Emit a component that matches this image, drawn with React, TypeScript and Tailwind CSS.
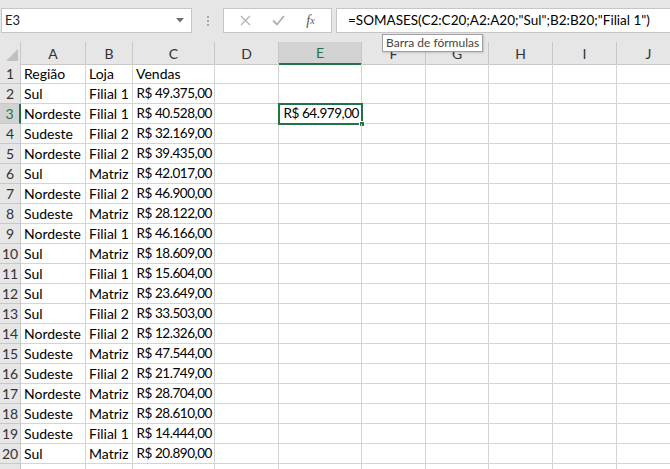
const rows: [string, string, string][] = [
  ['Sul', 'Filial 1', '49.375,00'],
  ['Nordeste', 'Filial 1', '40.528,00'],
  ['Sudeste', 'Filial 2', '32.169,00'],
  ['Nordeste', 'Filial 2', '39.435,00'],
  ['Sul', 'Matriz', '42.017,00'],
  ['Nordeste', 'Filial 2', '46.900,00'],
  ['Sudeste', 'Matriz', '28.122,00'],
  ['Nordeste', 'Filial 1', '46.166,00'],
  ['Sul', 'Matriz', '18.609,00'],
  ['Sul', 'Filial 1', '15.604,00'],
  ['Sul', 'Matriz', '23.649,00'],
  ['Sul', 'Filial 2', '33.503,00'],
  ['Nordeste', 'Filial 2', '12.326,00'],
  ['Sudeste', 'Matriz', '47.544,00'],
  ['Sudeste', 'Filial 2', '21.749,00'],
  ['Nordeste', 'Matriz', '28.704,00'],
  ['Sudeste', 'Matriz', '28.610,00'],
  ['Sudeste', 'Filial 1', '14.444,00'],
  ['Sul', 'Matriz', '20.890,00'],
];

const cols = ['A', 'B', 'C', 'D', 'E', 'F', 'G', 'H', 'I', 'J'];
const gridCols = 'grid grid-cols-[21px_65px_47px_82px_64px_83px_64px_63px_64px_64px_64px]';

function Cell({ children, right, className = '' }: { children?: React.ReactNode; right?: boolean; className?: string }) {
  return (
    <div
      className={`h-[20px] border-r border-b border-[#d4d4d4] flex items-center overflow-visible whitespace-nowrap ${
        right ? 'justify-end pr-[2px]' : 'pl-[3px]'
      } ${className}`}
    >
      {children}
    </div>
  );
}

function Money({ v }: { v: string }) {
  return <span className="text-[13.5px] tracking-[-0.45px]">R$ {v}</span>;
}

export default function App() {
  const data: [string, string, React.ReactNode][] = [
    ['Região', 'Loja', 'Vendas'],
    ...rows.map((r) => [r[0], r[1], <Money v={r[2]} />] as [string, string, React.ReactNode]),
  ];

  return (
    <div className="w-[670px] h-[469px] overflow-hidden bg-white relative text-[14px] text-black font-['Lato','Liberation_Sans',sans-serif]">
      {/* Formula bar */}
      <div className="h-[42px] bg-[#e6e6e6] flex items-start pt-[8px] pl-[1px]">
        <div className="w-[191px] h-[25px] bg-white border border-[#c6c6c6] flex items-center justify-between pl-[3px] pr-[7px] text-[13px] text-[#222]">
          <span>E3</span>
          <svg width="8" height="5" viewBox="0 0 8 5">
            <path d="M0 0 H8 L4 4.5 Z" fill="#707070" />
          </svg>
        </div>
        <div className="w-[31px] h-[25px] flex flex-col items-center justify-center gap-[2px]">
          <span className="w-[2px] h-[2px] bg-[#a8a8a8]" />
          <span className="w-[2px] h-[2px] bg-[#a8a8a8]" />
          <span className="w-[2px] h-[2px] bg-[#a8a8a8]" />
        </div>
        <div className="w-[109px] h-[25px] bg-white border border-[#c6c6c6] flex items-center">
          <div className="w-[38px] flex justify-center pl-[4px]">
            <svg width="11" height="11" viewBox="0 0 11 11">
              <path d="M1 1 L10 10 M10 1 L1 10" stroke="#b0b0b0" strokeWidth="1.2" />
            </svg>
          </div>
          <div className="w-[32px] flex justify-center">
            <svg width="13" height="11" viewBox="0 0 13 11">
              <path d="M1 5.5 L5 9.5 L12 1" stroke="#b0b0b0" strokeWidth="1.8" fill="none" />
            </svg>
          </div>
          <div className="flex-1 flex justify-center pr-[4px] font-['Liberation_Serif',serif] italic text-[14px] text-[#555]">
            f<span className="text-[10px] mt-[3px]">x</span>
          </div>
        </div>
        <div className="ml-[4px] flex-1 h-[25px] bg-white border border-[#c6c6c6] border-r-0 flex items-center pl-[11px] text-[13.5px] whitespace-nowrap">
          =SOMASES(C2:C20;A2:A20;"Sul";B2:B20;"Filial 1")
        </div>
      </div>

      {/* Column headers */}
      <div className={`${gridCols} h-[22px] bg-[#e6e6e6]`}>
        <div className="border-r border-b border-[#c8c8c8] bg-[#e6e6e6] flex items-end justify-end pr-[2px] pb-[3px]">
          <svg width="12" height="12" viewBox="0 0 12 12">
            <path d="M12 0 V12 H0 Z" fill="#c0c0c0" />
          </svg>
        </div>
        {cols.map((c) =>
          c === 'E' ? (
            <div key={c} className="bg-[#d2d2d2] border-r border-[#c8c8c8] border-b-2 border-b-[#217346] flex items-center justify-center text-[14px] text-[#217346]">
              {c}
            </div>
          ) : (
            <div key={c} className="bg-[#e6e6e6] border-r border-b border-[#c8c8c8] flex items-center justify-center text-[14px] text-[#333]">
              {c}
            </div>
          ),
        )}
      </div>

      {/* Rows */}
      {Array.from({ length: 21 }, (_, i) => {
        const n = i + 1;
        const d = data[i];
        const sel = n === 3;
        return (
          <div key={n} className={gridCols}>
            <div
              className={`h-[20px] border-b border-[#c8c8c8] flex items-center justify-center text-[14px] ${
                sel ? 'bg-[#d2d2d2] text-[#217346] border-r-2 border-r-[#217346]' : 'bg-[#e6e6e6] text-[#333] border-r'
              }`}
            >
              {n <= 20 ? n : null}
            </div>
            <Cell>{d?.[0]}</Cell>
            <Cell>{d?.[1]}</Cell>
            <Cell right={n > 1}>{d?.[2]}</Cell>
            <Cell />
            <div className="relative">
              <Cell right>{sel && <Money v="64.979,00" />}</Cell>
              {sel && (
                <div className="absolute -left-[1px] -top-[1px] w-[85px] h-[22px] border-2 border-[#217346]">
                  <span className="absolute -right-[4px] -bottom-[4px] w-[6px] h-[6px] bg-[#217346] border border-white" />
                </div>
              )}
            </div>
            <Cell />
            <Cell />
            <Cell />
            <Cell />
            <Cell />
          </div>
        );
      })}

      {/* Tooltip */}
      <div className="absolute left-[382px] top-[34px] h-[18px] px-[3px] bg-white border border-[#a0a0a0] flex items-center text-[12px] text-[#444] shadow-[1px_1px_2px_rgba(0,0,0,0.15)]">
        Barra de fórmulas
      </div>
    </div>
  );
}
